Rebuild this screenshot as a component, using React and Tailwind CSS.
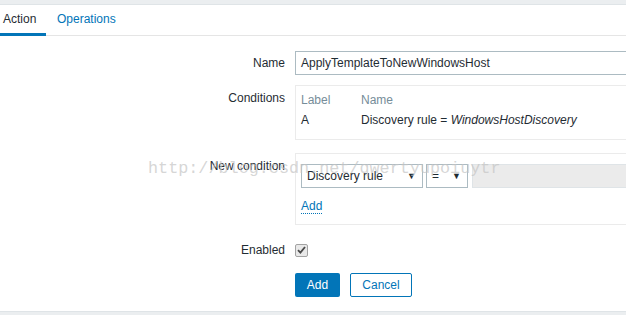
import React from 'react';

/* Action form — tabs, condition table, new condition row, buttons */

function Label({ children, className = '' }) {
  return (
    <div className={'w-[285px] shrink-0 text-right pr-0 text-[12px] text-[#1f2c33] ' + className}>
      {children}
    </div>
  );
}

function Select({ value, width }) {
  return (
    <div
      className="h-[24px] border border-[#acbbc2] bg-white flex items-center justify-between pl-[5px] pr-[6px] text-[12px] text-[#1f2c33]"
      style={{ width }}
    >
      <span>{value}</span>
      <span className="text-[9px] leading-none">▼</span>
    </div>
  );
}

export default function App() {
  return (
    <div className="relative w-[626px] h-[315px] overflow-hidden bg-white font-['Liberation_Sans',Arial,sans-serif] text-[12px] text-[#1f2c33] flex flex-col">
      <div className="h-[5px] bg-[#ebeef0] border-b border-[#dfe4e7] shrink-0" />

      {/* tabs */}
      <div className="h-[31px] flex border-b border-[#e5e5e5] shrink-0">
        <div className="pl-[3px] pr-[10px] w-[46px] flex items-center text-[12px] text-[#1f2c33] border-b-[3px] border-[#0275b8] -mb-px">
          Action
        </div>
        <div className="pl-[11px] flex items-center text-[12px] text-[#0275b8] pb-[3px]">Operations</div>
      </div>

      {/* form */}
      <div className="flex flex-col pt-[15px]">
        <div className="flex items-center">
          <Label>Name</Label>
          <div className="ml-[10px] w-[400px] h-[24px] border border-[#acbbc2] flex items-center pl-[5px] shrink-0">
            ApplyTemplateToNewWindowsHost
          </div>
        </div>

        <div className="flex mt-[10px]">
          <Label className="pt-[4px]">Conditions</Label>
          <div className="ml-[10px] w-[400px] h-[55px] border border-[#ebebeb] shrink-0 pl-[5px] pt-[6px]">
            <div className="flex h-[15px] items-center text-[#768d99]">
              <span className="w-[60px]">Label</span>
              <span>Name</span>
            </div>
            <div className="flex h-[15px] items-center mt-[5px]">
              <span className="w-[60px]">A</span>
              <span>
                Discovery rule = <i>WindowsHostDiscovery</i>
              </span>
            </div>
          </div>
        </div>

        <div className="flex mt-[13px]">
          <Label className="pt-[4px]">New condition</Label>
          <div className="ml-[10px] w-[400px] h-[72px] border border-[#ebebeb] shrink-0 pl-[5px] pt-[10px]">
            <div className="flex gap-[3px]">
              <Select value="Discovery rule" width={122} />
              <Select value="=" width={42} />
              <div className="ml-[1px] w-[200px] h-[24px] bg-[#ebebeb] border border-[#dfe4e7]" />
            </div>
            <div className="mt-[9px]">
              <span className="text-[#0275b8] border-b border-dotted border-[#0275b8] leading-[14px] inline-block">
                Add
              </span>
            </div>
          </div>
        </div>

        <div className="flex items-center mt-[13px] h-[24px]">
          <Label>Enabled</Label>
          <div className="ml-[10px] w-[13px] h-[13px] border border-[#a3a3a3] rounded-[2px] bg-[#e9e9e9] flex items-center justify-center">
            <svg width="9" height="8" viewBox="0 0 9 8">
              <path d="M1 4.2 L3.4 6.6 L8 1" fill="none" stroke="#4a4a4a" strokeWidth="1.8" />
            </svg>
          </div>
        </div>

        <div className="flex mt-[11px] pl-[295px] gap-[10px]">
          <button className="w-[45px] h-[24px] bg-[#0275b8] text-white text-[12px] rounded-[2px]">Add</button>
          <button className="w-[62px] h-[24px] bg-white border border-[#0275b8] text-[#0275b8] text-[12px] rounded-[2px]">
            Cancel
          </button>
        </div>
      </div>

      <div className="mt-auto h-[4px] bg-[#ebeef0] border-t border-[#dfe4e7] shrink-0" />

      {/* watermark */}
      <div className="absolute left-[148px] top-[156px] font-['Liberation_Mono',monospace] text-[16.8px] text-[#c4c4c4]/70 pointer-events-none whitespace-nowrap">
        http://blog.csdn.net/qwertyupoiuytr
      </div>
    </div>
  );
}
